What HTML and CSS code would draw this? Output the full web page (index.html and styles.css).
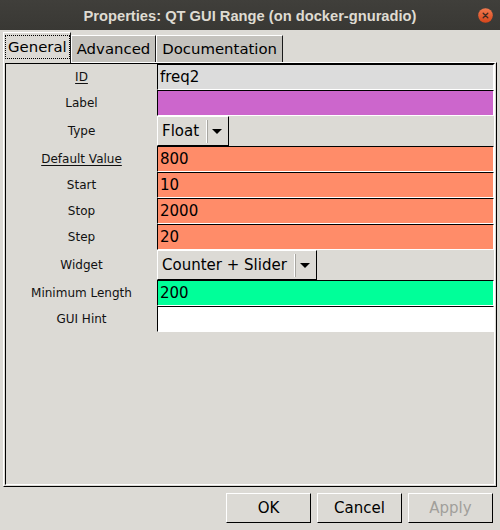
FILE: index.html
```html
<!DOCTYPE html>
<html>
<head>
<meta charset="utf-8">
<link rel="stylesheet" href="styles.css">
</head>
<body>
<div class="window">
  <header class="titlebar">
    <span class="title">Properties: QT GUI Range (on docker-gnuradio)</span>
    <span class="close">
      <svg width="15" height="15" viewBox="0 0 15 15">
        <defs>
          <linearGradient id="cg" x1="0" y1="0" x2="0" y2="1">
            <stop offset="0" stop-color="#f27a4f"/>
            <stop offset="1" stop-color="#d6451a"/>
          </linearGradient>
        </defs>
        <circle cx="7.5" cy="7.5" r="7.3" fill="url(#cg)"/>
        <path d="M5.2 5.2 L9.8 9.8 M9.8 5.2 L5.2 9.8" stroke="#3b2a22" stroke-width="1.3" stroke-linecap="round"/>
      </svg>
    </span>
  </header>

  <nav class="tabs">
    <div class="tab tab-active"><span class="focus">General</span></div>
    <div class="tab">Advanced</div>
    <div class="tab">Documentation</div>
  </nav>

  <section class="pane">
    <div class="canvas">
      <div class="form">
        <div class="label"><u>ID</u></div>
        <div class="field"><div class="entry entry-id">freq2</div></div>

        <div class="label">Label</div>
        <div class="field"><div class="entry entry-string"></div></div>

        <div class="label">Type</div>
        <div class="field">
          <div class="combo"><span class="combo-text">Float</span><span class="combo-sep"></span>
            <svg class="combo-arrow" width="10" height="5" viewBox="0 0 10 5"><polygon points="0,0 10,0 5,5" fill="#000"/></svg>
          </div>
        </div>

        <div class="label"><u>Default Value</u></div>
        <div class="field"><div class="entry entry-float">800</div></div>

        <div class="label">Start</div>
        <div class="field"><div class="entry entry-float">10</div></div>

        <div class="label">Stop</div>
        <div class="field"><div class="entry entry-float">2000</div></div>

        <div class="label">Step</div>
        <div class="field"><div class="entry entry-float">20</div></div>

        <div class="label">Widget</div>
        <div class="field">
          <div class="combo"><span class="combo-text">Counter + Slider</span><span class="combo-sep"></span>
            <svg class="combo-arrow" width="10" height="5" viewBox="0 0 10 5"><polygon points="0,0 10,0 5,5" fill="#000"/></svg>
          </div>
        </div>

        <div class="label">Minimum Length</div>
        <div class="field"><div class="entry entry-int">200</div></div>

        <div class="label">GUI Hint</div>
        <div class="field"><div class="entry entry-plain"></div></div>
      </div>
    </div>
  </section>

  <footer class="buttons">
    <button class="btn">OK</button>
    <button class="btn">Cancel</button>
    <button class="btn btn-disabled">Apply</button>
  </footer>
</div>
</body>
</html>
```

FILE: styles.css
```css
* { box-sizing: border-box; }

html, body {
  margin: 0;
  padding: 0;
  background: #dcdad5;
}

.window {
  width: 500px;
  height: 530px;
  display: flex;
  flex-direction: column;
  background: #dcdad5;
  font-family: "DejaVu Sans", sans-serif;
  color: #000;
}

/* title bar */
.titlebar {
  height: 30px;
  flex: none;
  display: grid;
  grid-template-columns: 1fr auto 1fr;
  align-items: center;
  background: linear-gradient(#403f3b, #393834);
}
.title {
  grid-column: 2;
  font-family: "Liberation Sans", sans-serif;
  font-weight: bold;
  font-size: 14.7px;
  color: #dfdbd2;
  white-space: nowrap;
  padding-top: 1px;
}
.close {
  grid-column: 3;
  justify-self: end;
  margin-right: 7px;
  width: 15px;
  height: 15px;
  display: flex;
  margin-top: 1px;
}

/* tabs */
.tabs {
  height: 32px;
  flex: none;
  display: flex;
  align-items: flex-end;
  padding-left: 3px;
}
.tab {
  height: 27px;
  padding: 0 5px 0 5px;
  display: flex;
  align-items: center;
  font-size: 14.9px;
  background: #c4c2bd;
  border-style: solid;
  border-width: 1px 1px 0 1px;
  border-color: #fff #1a1a1a transparent #fff;
}
.tab-active {
  height: 31px;
  margin-bottom: -1px;
  padding: 0 1px 2px 2px;
  background: #dcdad5;
  position: relative;
  z-index: 1;
}
.focus {
  display: inline-block;
  padding: 2px 2px;
  line-height: 18px;
  outline: 1px dotted #000;
}

/* pane */
.pane {
  height: 425px;
  flex: none;
  margin: 0 3px;
  padding: 0 1px 1px 1px;
  border-style: solid;
  border-width: 1px;
  border-color: #fff #000 #000 #fff;
}
.canvas {
  height: 100%;
  border-style: solid;
  border-width: 1px;
  border-color: #000 #fff #fff #000;
}
.form {
  display: grid;
  grid-template-columns: 151px 1fr;
}
.label {
  display: flex;
  align-items: center;
  justify-content: center;
  font-size: 12px;
  color: #111;
}
.label u { text-decoration-thickness: 1px; text-underline-offset: 2px; }
.field {
  display: flex;
}

.entry {
  width: 100%;
  height: 26px;
  padding-left: 2px;
  display: flex;
  align-items: center;
  font-size: 15px;
  border-style: solid;
  border-width: 1px;
  border-color: #000 #fff #fff #000;
}
.entry-id { background: #dcdcdc; }
.entry-string { background: #cc66cc; }
.entry-float { background: #ff8c69; }
.entry-int { background: #00ff99; }
.entry-plain { background: #fff; }

.combo {
  height: 30px;
  display: flex;
  align-items: center;
  padding: 0 6px 0 4px;
  font-size: 15px;
  background: #dcdad5;
  border-style: solid;
  border-width: 1px;
  border-color: #fff #000 #000 #fff;
}
.combo-text { white-space: nowrap; }
.combo-sep {
  width: 2px;
  height: 23px;
  margin-left: 7px;
  border-left: 1px solid #fff;
  border-right: 1px solid #a8a6a1;
}
.combo-arrow {
  margin-left: 4px;
  display: block;
}

/* buttons */
.buttons {
  flex: none;
  display: flex;
  justify-content: flex-end;
  gap: 6px;
  padding: 6px 7px 0 0;
}
.btn {
  width: 85px;
  height: 30px;
  margin: 0;
  padding: 0;
  font-family: "DejaVu Sans", sans-serif;
  font-size: 15px;
  color: #000;
  background: #dcdad5;
  border-style: solid;
  border-width: 1px;
  border-color: #fff #000 #000 #fff;
}
.btn-disabled { color: #a19f9b; }
```
